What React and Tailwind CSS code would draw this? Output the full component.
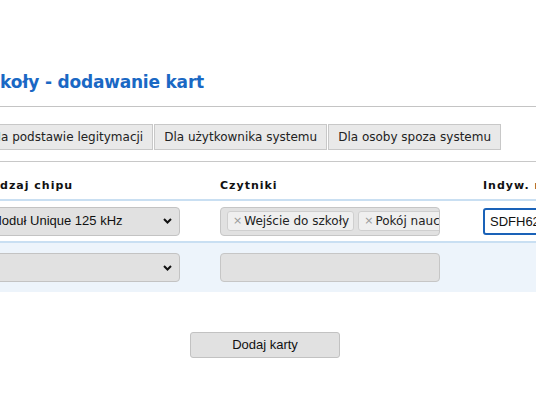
import React from "react";

const Chevron = () => (
  <svg width="9" height="6" viewBox="0 0 9 6" className="shrink-0">
    <path d="M1 1l3.5 3.5L8 1" fill="none" stroke="#111" strokeWidth="2" />
  </svg>
);

const SelectBox = ({ value }) => (
  <div className="w-[198px] h-[29px] flex items-center justify-between pl-[8px] pr-[7px] bg-[#e1e1e1] border border-[#c3c3c3] rounded-[4px] text-[13px] text-[#111] font-['Liberation_Sans',Arial,sans-serif]">
    <span className="whitespace-nowrap">{value}</span>
    <Chevron />
  </div>
);

const Tag = ({ label }) => (
  <div className="flex items-center shrink-0 h-[20px] pl-[5px] pr-[4px] bg-[#efefef] border border-[#cfcfcf] rounded-[3px] text-[12px] text-[#222] whitespace-nowrap">
    <span className="text-[#999] text-[11px] mr-[2px]">×</span>
    {label}
  </div>
);

const App = () => {
  const tabs = [
    "Na podstawie legitymacji",
    "Dla użytkownika systemu",
    "Dla osoby spoza systemu",
  ];

  return (
    <div className="w-[536px] h-[409px] overflow-hidden bg-white font-['DejaVu_Sans',Verdana,sans-serif]">
      <div className="ml-[-40px] w-[720px]">
        <div className="pt-[70px] w-[244px] flex justify-end">
          <h1 className="shrink-0 whitespace-nowrap text-[17px] leading-[24px] font-bold tracking-[-0.2px] text-[#1a68c4]">
            Karty szkoły - dodawanie kart
          </h1>
        </div>
        <div className="mt-[12px] border-t border-[#c4c4c4]" />

        <div className="flex gap-[1px] pl-[22px] mt-[17px]">
          {tabs.map((t) => (
            <div
              key={t}
              className="h-[26px] flex items-center px-[9px] bg-[#e9e9e9] border border-[#c8c8c8] text-[12px] text-[#222] whitespace-nowrap"
            >
              {t}
            </div>
          ))}
        </div>
        <div className="mt-[11px] border-t border-[#c8c8c8]" />

        <div className="grid grid-cols-[260px_263px_1fr] h-[39px] items-end pb-[5px] border-b-2 border-[#c9dff2] text-[11px] font-bold tracking-[1px] text-[#111]">
          <div className="pl-[22px]">Rodzaj chipu</div>
          <div>Czytniki</div>
          <div>Indyw. numer karty</div>
        </div>

        <div className="grid grid-cols-[260px_263px_1fr] h-[42px] items-center border-b-2 border-[#c9dff2]">
          <div className="pl-[22px]">
            <SelectBox value="Moduł Unique 125 kHz" />
          </div>
          <div className="w-[220px] h-[29px] flex items-center gap-[4px] pl-[6px] bg-[#e1e1e1] border border-[#c6c6c6] rounded-[4px] overflow-hidden">
            <Tag label="Wejście do szkoły" />
            <Tag label="Pokój nauczycielski" />
          </div>
          <div>
            <input
              readOnly
              value="SDFH6283"
              className="w-[160px] h-[27px] px-[5px] border-2 border-[#1a62b8] rounded-[3px] text-[13px] text-[#111] outline-none font-['Liberation_Sans',Arial,sans-serif]"
            />
          </div>
        </div>

        <div className="grid grid-cols-[260px_263px_1fr] h-[49px] items-center bg-[#edf4fb]">
          <div className="pl-[22px]">
            <SelectBox value="" />
          </div>
          <div className="w-[220px] h-[29px] bg-[#e1e1e1] border border-[#c6c6c6] rounded-[4px]" />
          <div />
        </div>

        <div className="ml-[230px] mt-[40px] w-[150px] h-[26px] flex items-center justify-center bg-[#e1e1e1] border border-[#c2c2c2] rounded-[3px] text-[13px] text-[#111] font-['Liberation_Sans',Arial,sans-serif]">
          Dodaj karty
        </div>
      </div>
    </div>
  );
};

export default App;
